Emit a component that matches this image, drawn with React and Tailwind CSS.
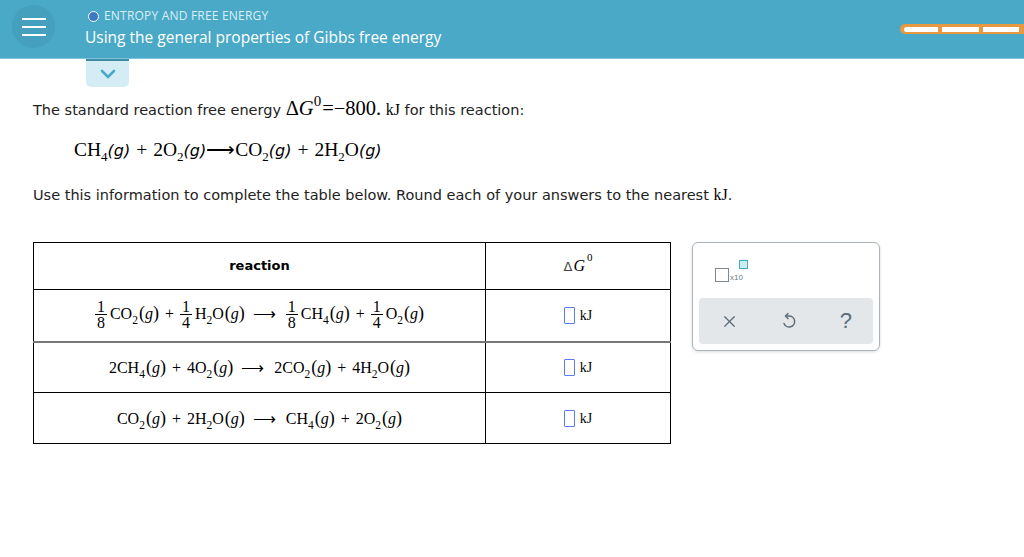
import React from 'react';
import { X } from 'lucide-react';

const serif = "font-['Liberation_Serif',serif]";

const Sub = ({ children }) => (
  <span className="text-[11.5px] relative top-[5px]">{children}</span>
);

// chemical species, e.g. CO<sub>2</sub>(g)
const Sp = ({ coef, el, sub, el2 }) => (
  <span className="whitespace-nowrap">
    {coef}
    {el}
    {sub && <Sub>{sub}</Sub>}
    {el2}
    <span className="text-[18px] ml-[1px]">(</span>
    <span className="italic">g</span>
    <span className="text-[18px]">)</span>
  </span>
);

const Plus = () => <span className="mx-[6px]">+</span>;

const Frac = ({ n, d }) => (
  <span className="inline-flex flex-col items-center align-middle mr-[3px] font-['Liberation_Serif',serif] relative top-[-1px]">
    <span className="text-[16px] leading-[15px] px-[1px]">{n}</span>
    <span className="text-[16px] leading-[15px] border-t border-black px-[2px]">{d}</span>
  </span>
);

const KJ = () => (
  <div className="flex items-center justify-center gap-[5px]">
    <span className="w-[11px] h-[17px] border-[1.5px] border-[#5b7cf0] rounded-[1px]" />
    <span className={`${serif} text-[14px] text-black`}>kJ</span>
  </div>
);

const Arrow = () => <span className="ml-[8px] mr-[10px]">⟶</span>;

const Gs = ({ children }) => (
  <span className="font-['DejaVu_Sans',sans-serif] italic text-[16px]">{children}</span>
);

const Sub2 = ({ children }) => (
  <span className="text-[13px] relative top-[5px]">{children}</span>
);

export default function App() {
  return (
    <div className="w-[1024px] h-[557px] bg-white overflow-hidden font-['Open_Sans',sans-serif]">
      {/* Top bar */}
      <header className="h-[59px] bg-[#4aa9c7] border-b border-[#7fc4da] flex items-start relative">
        <div className="ml-[12px] mt-[5px] w-[43px] h-[43px] rounded-full bg-[#44a0bc] flex flex-col items-center justify-center gap-[6px]">
          <span className="block w-[24px] h-[2px] bg-white" />
          <span className="block w-[24px] h-[2px] bg-white" />
          <span className="block w-[24px] h-[2px] bg-white" />
        </div>
        <div className="ml-[30px] mt-[7px] flex flex-col">
          <div className="flex items-center gap-[5px] ml-[3px]">
            <span className="w-[11px] h-[11px] rounded-full bg-[#3b79c3] border-[1.5px] border-white" />
            <span className="text-[12px] text-[#d9eff6] tracking-[0.2px]">ENTROPY AND FREE ENERGY</span>
          </div>
          <div className="text-[15.5px] text-white mt-[2px] leading-[20px]">Using the general properties of Gibbs free energy</div>
        </div>
        <div className="absolute left-[900px] top-[24px] w-[130px] h-[10px] bg-[#e8993f] rounded-l-full flex items-center gap-[4px] pl-[4px]">
          <span className="w-[34px] h-[5px] bg-white rounded-l-full" />
          <span className="w-[37px] h-[5px] bg-white" />
          <span className="w-[36px] h-[5px] bg-white" />
        </div>
      </header>

      {/* Chevron tab */}
      <div className="ml-[86px] w-[43px] h-[28px] bg-[#d4edf4] rounded-b-[5px] border-t-2 border-[#3f8ca6] flex items-center justify-center">
        <svg width="16" height="10" viewBox="0 0 16 10">
          <path d="M2 2 L8 8 L14 2" fill="none" stroke="#4aa9c7" strokeWidth="2.6" strokeLinecap="round" />
        </svg>
      </div>

      <main className="px-[33px] font-['DejaVu_Sans',Verdana,sans-serif] text-[14.5px] text-[#222]">
        <p className="mt-[10px] leading-[22px]">
          The standard reaction free energy{' '}
          <span className={`${serif} text-[20.5px] text-black`}>
            Δ<span className="italic">G</span>
            <span className="text-[15px] relative top-[-9px] mr-[1px]">0</span>=−800.
          </span>{' '}
          <span className={`${serif} text-[16px] text-black`}>kJ</span> for this reaction:
        </p>

        <p className={`${serif} text-[19.5px] text-black ml-[41px] mt-[17px] leading-[24px]`}>
          CH<Sub2>4</Sub2><Gs>(g)</Gs><Plus />2O<Sub2>2</Sub2><Gs>(g)</Gs>⟶CO<Sub2>2</Sub2><Gs>(g)</Gs><Plus />2H<Sub2>2</Sub2>O<Gs>(g)</Gs>
        </p>

        <p className="mt-[20px] leading-[22px]">
          Use this information to complete the table below. Round each of your answers to the nearest{' '}
          <span className={`${serif} text-[16px] text-black`}>kJ</span>.
        </p>

        <div className="flex items-start mt-[36px]">
          <table className="w-[638px] border-collapse border border-black">
            <tbody>
              <tr className="h-[47px] border-b border-black">
                <th className="w-[452px] border-r border-black text-[13px] font-bold text-black">reaction</th>
                <th className="font-normal">
                  <span className={`${serif} text-[16px] text-black`}>
                    <span className="font-['DejaVu_Sans',sans-serif] text-[#444] text-[13px] mr-[1px]">Δ</span>
                    <span className="italic">G</span>
                    <span className="text-[11px] relative top-[-10px] ml-[2px]">0</span>
                  </span>
                </th>
              </tr>
              <tr className="h-[52px] border-b-2 border-[#777]">
                <td className={`border-r border-black text-center ${serif} text-[16px] text-black`}>
                  <Frac n="1" d="8" />
                  <Sp el="CO" sub="2" /><Plus /><Frac n="1" d="4" />
                  <Sp el="H" sub="2" el2="O" />
                  <Arrow />
                  <Frac n="1" d="8" />
                  <Sp el="CH" sub="4" /><Plus /><Frac n="1" d="4" />
                  <Sp el="O" sub="2" />
                </td>
                <td><KJ /></td>
              </tr>
              <tr className="h-[51px] border-b border-black">
                <td className={`border-r border-black text-center ${serif} text-[16px] text-black`}>
                  <Sp coef="2" el="CH" sub="4" /><Plus /><Sp coef="4" el="O" sub="2" />
                  <Arrow />
                  <Sp coef="2" el="CO" sub="2" /><Plus /><Sp coef="4" el="H" sub="2" el2="O" />
                </td>
                <td><KJ /></td>
              </tr>
              <tr className="h-[51px]">
                <td className={`border-r border-black text-center ${serif} text-[16px] text-black`}>
                  <Sp el="CO" sub="2" /><Plus /><Sp coef="2" el="H" sub="2" el2="O" />
                  <Arrow />
                  <Sp el="CH" sub="4" /><Plus /><Sp coef="2" el="O" sub="2" />
                </td>
                <td><KJ /></td>
              </tr>
            </tbody>
          </table>

          {/* Answer tools */}
          <div className="ml-[21px] w-[188px] h-[109px] border border-[#aab4bb] rounded-[6px] shadow-[0_1px_3px_rgba(0,0,0,0.15)] px-[6px] pt-[17px] flex flex-col">
            <div className="flex items-end ml-[16px] h-[22px] relative">
              <span className="w-[14px] h-[14px] border-[1.5px] border-[#7d8a93]" />
              <span className="font-['Liberation_Sans',sans-serif] text-[8px] text-[#6c7a84] leading-none ml-[1px]">x10</span>
              <span className="absolute left-[24px] top-0 w-[9px] h-[9px] bg-[#cdebf3] border-[1.5px] border-[#4aa9c7]" />
            </div>
            <div className="mt-[16px] h-[46px] bg-[#e3e7ea] rounded-[4px] flex items-center justify-around text-[#5b6c77]">
              <X size={19} strokeWidth={1.5} />
              <svg width="16" height="18" viewBox="0 0 16 18" fill="none" stroke="currentColor" strokeWidth="1.5" strokeLinecap="round" strokeLinejoin="round">
                <path d="M5 4 H8 A5.5 5.5 0 1 1 3 11.5" />
                <path d="M7 1.5 L4.5 4 L7 6.5" />
              </svg>
              <span className="font-['Liberation_Sans',sans-serif] text-[22px] leading-none font-light">?</span>
            </div>
          </div>
        </div>
      </main>
    </div>
  );
}
